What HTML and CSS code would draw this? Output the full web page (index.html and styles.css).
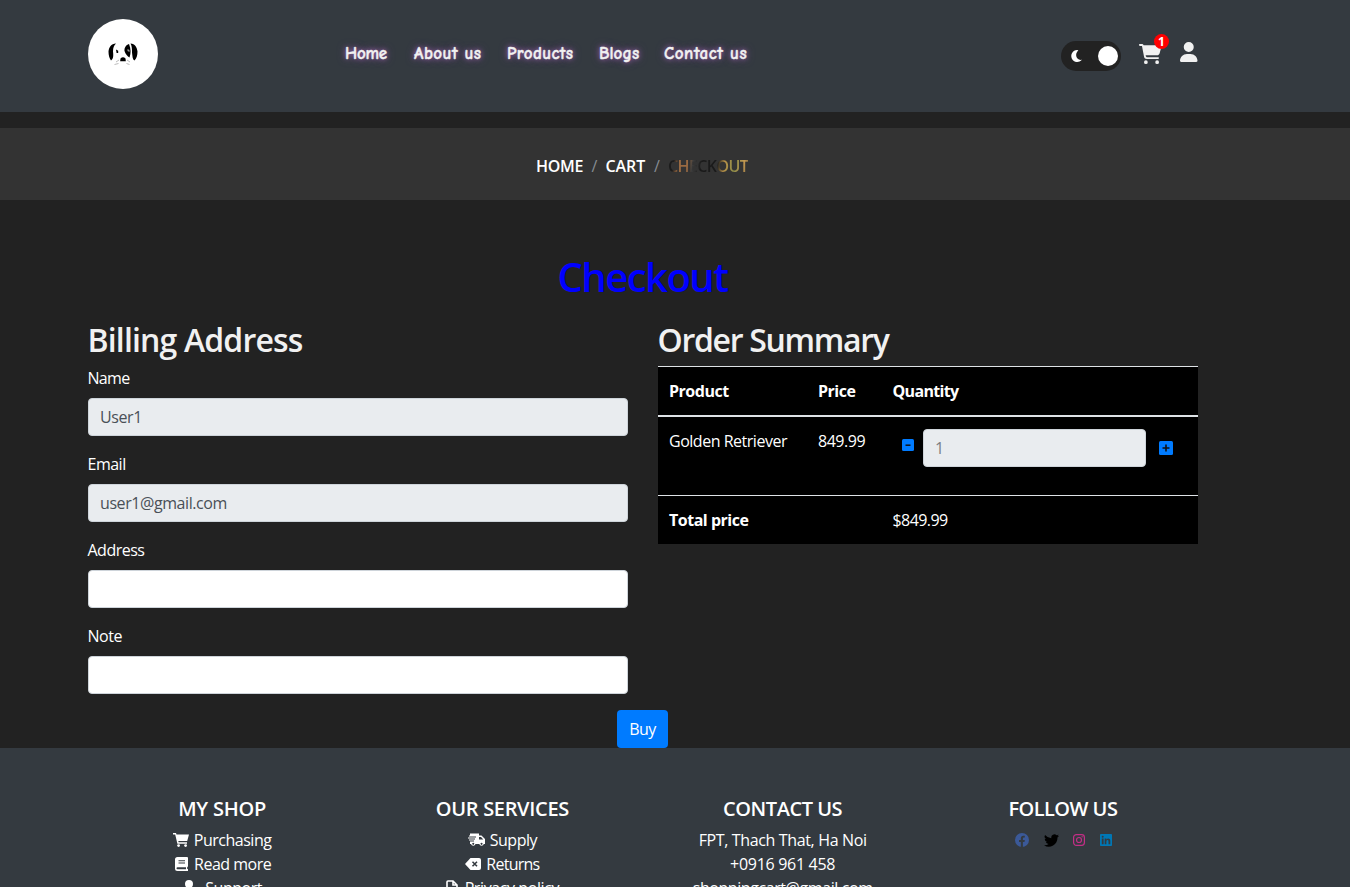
FILE: index.html
```html
<!DOCTYPE html>
<html lang="en">
<head>
<meta charset="utf-8">
<title>Checkout</title>
<link rel="stylesheet" href="styles.css">
</head>
<body>
<header class="header">
  <a class="logo"><svg width="70" height="70" viewBox="0 0 70 70">
    <path d="M28 24.500c-5 0-7 4-7.500 8 0 4 1 7 2.500 9 2.500-1.500 2.500-5 2-9 0-4 1-6 3-8z"/>
    <path d="M42.500 24.500c4.500 0 6.500 4 7 8 0 4-1 7-3 9-2-1-2-4-2.500-8 0-4 0-6-1.500-9z"/>
    <path d="M41 25c-3 1-5 4-4.500 7 1 3 3 5.500 5 6.500 1.500-4 1.500-9-.5-13.500z"/>
    <path d="M39.500 30l2 1v2l-2-1z" fill="#999"/>
    <path d="M28 30.500l2.200 1.200v2.300h-1.600z"/>
    <path d="M32.500 39.500q2.500-2.500 5 0l.3 2.800h-5.600z"/>
    <path d="M28 43l3-2M26.500 45.500l4-1M39 41l3 2M38.500 44.500l3 1" stroke="#aaa" stroke-width=".8"/>
  </svg></a>
  <nav class="nav">
    <a class="n1">Home</a><a class="n2">About us</a><a class="n3">Products</a><a class="n4">Blogs</a><a class="n5">Contact us</a>
  </nav>
  <div class="tools">
    <div class="toggle">
      <svg width="12" height="12" viewBox="0 0 12 12"><path d="M6 0a6 6 0 1 0 4.900 9.800C6.500 11 2.500 5 7.400.2Q6.800 0 6 0z" fill="#fff"/></svg>
      <span class="knob"></span>
    </div>
    <div class="cart">
      <svg width="22.500" height="20" viewBox="0 0 576 512"><path fill="#f1f1f1" d="M0 24C0 10.700 10.700 0 24 0H69.500c22 0 41.500 12.800 50.600 32h411c26.300 0 45.500 25 38.600 50.400l-41 152.300c-8.500 31.400-37 53.300-69.500 53.300H170.700l5.400 28.500c2.200 11.300 12.100 19.500 23.600 19.500H488c13.300 0 24 10.700 24 24s-10.700 24-24 24H199.700c-34.600 0-64.300-24.600-70.700-58.500L77.400 54.500c-.7-3.800-4-6.500-7.900-6.500H24C10.700 48 0 37.300 0 24zM128 464a48 48 0 1 1 96 0 48 48 0 1 1-96 0zm336-48a48 48 0 1 1 0 96 48 48 0 1 1 0-96z"/></svg>
      <span class="badge">1</span>
    </div>
    <svg class="user" width="17.500" height="20" viewBox="0 0 448 512"><path fill="#f1f1f1" d="M224 256A128 128 0 1 0 224 0a128 128 0 1 0 0 256zm-45.700 48C79.800 304 0 383.800 0 482.300C0 498.700 13.300 512 29.700 512H418.300c16.400 0 29.700-13.300 29.700-29.700C448 383.800 368.200 304 269.700 304H178.300z"/></svg>
  </div>
</header>

<div class="crumbs">
  <span class="c-home">HOME</span><span class="sep">/</span><span class="c-cart">CART</span><span class="sep">/</span><span class="c-current">CHECKOUT</span>
</div>

<main class="main">
  <h1>Checkout</h1>
  <div class="columns">
    <section class="billing">
      <h2>Billing Address</h2>
      <label class="name">Name</label><div class="field off">User1</div>
      <label>Email</label><div class="field off">user1@gmail.com</div>
      <label>Address</label><div class="field"></div>
      <label>Note</label><div class="field"></div>
    </section>
    <section class="summary">
      <h2 class="order">Order Summary</h2>
      <div class="table">
        <div class="row head"><span>Product</span><span>Price</span><span class="qty">Quantity</span></div>
        <div class="row item"><span>Golden Retriever</span><span>849.99</span>
          <div class="stepper">
            <svg class="minus" width="12" height="12" viewBox="0 0 12 12"><rect width="12" height="12" rx="1.500" fill="#007bff"/><path d="M3.500 6.200h5" stroke="#111" stroke-width="1.500"/></svg>
            <div class="field off count">1</div>
            <svg class="plus" width="14" height="14" viewBox="0 0 14 14"><rect width="14" height="14" rx="1.500" fill="#007bff"/><path d="M3.500 7h7M7 3.500v7" stroke="#111" stroke-width="1.600"/></svg>
          </div>
        </div>
        <div class="row total"><b>Total price</b><span></span><span class="sum">$849.99</span></div>
      </div>
    </section>
  </div>
  <div class="actions"><button class="buy">Buy</button></div>
</main>

<footer class="footer">
  <div class="col">
    <h5 class="f1">MY SHOP</h5>
    <p><svg width="16" height="14" viewBox="0 0 16 14"><path fill="#fff" d="M0 0h3l.5 1.500H16L14.200 8H5.300l.3 1.300H14v1.400H4.400L2.200 1.400H0z"/><circle cx="5.600" cy="12.600" r="1.400" fill="#fff"/><circle cx="12.600" cy="12.600" r="1.400" fill="#fff"/></svg><span>Purchasing</span></p>
    <p class="more"><svg width="13" height="14" viewBox="0 0 13 14"><path fill="#fff" fill-rule="evenodd" d="M2.500 0H12q1 0 1 1v8.500l-.8.500v2H13v2H2.500Q0 14 0 11.500v-9Q0 0 2.500 0zM3.500 3.200v1h6.500v-1zM3.500 5.500v1h6.500v-1zM2.500 10.200q-1 0-1 1t1 1h8.500v-2z"/></svg><span class="read">Read more</span></p>
    <p class="support"><svg width="14" height="16" viewBox="0 0 448 512"><path fill="#fff" d="M224 256A128 128 0 1 0 224 0a128 128 0 1 0 0 256zm-45.700 48C79.800 304 0 383.800 0 482.300C0 498.700 13.300 512 29.700 512H418.300c16.400 0 29.700-13.300 29.700-29.700C448 383.800 368.200 304 269.700 304H178.300z"/></svg><span>Support</span></p>
  </div>
  <div class="col">
    <h5 class="f2">OUR SERVICES</h5>
    <p><svg width="17" height="14" viewBox="0 0 17 14"><path fill="#fff" fill-rule="evenodd" d="M2 .5h9v2h2.500L17 6v5h-1.200a2.300 2.300 0 0 1-4.500 0H7.500a2.300 2.300 0 0 1-4.500 0H2V8.500h4v-1H1v-1h6v-1H0v-1h8v-1H1v-1h1zM11 4v2.500h4.300L13 4zM13.500 9.800a1 1 0 1 0 .1 0zM5.200 9.800a1 1 0 1 0 .1 0z"/></svg><span>Supply</span></p>
    <p><svg width="16" height="12" viewBox="0 0 16 12"><path fill="#fff" d="M5.500 0H14q2 0 2 2v8q0 2-2 2H5.500L0 6z"/><path d="M7.500 3.700l4.500 4.600M12 3.700L7.500 8.300" stroke="#343a40" stroke-width="1.500"/></svg><span class="returns">Returns</span></p>
    <p class="policy"><svg width="12" height="16" viewBox="0 0 12 16"><path fill="none" stroke="#fff" stroke-width="1.600" d="M1 15V2q0-1 1-1h5l4 4v10zM7 1v4h4"/></svg><span>Privacy policy</span></p>
  </div>
  <div class="col">
    <h5 class="f3">CONTACT US</h5>
    <p class="place">FPT, Thach That, Ha Noi</p>
    <p class="phone">+0916 961 458</p>
    <p class="mail">shoppingcart@gmail.com</p>
  </div>
  <div class="col">
    <h5 class="f4">FOLLOW US</h5>
    <div class="social">
      <svg width="14" height="14" viewBox="0 0 14 14"><circle cx="7" cy="7" r="7" fill="#3b5998"/><path d="M5.800 14V9H4V7h1.800V5.400q0-2.600 2.500-2.600h1.500v1.800H8.900q-1 0-1 1V7h1.900l-.3 2H7.900v5z" fill="#343a40"/></svg>
      <svg width="15" height="13" viewBox="0 0 24 20"><path d="M24 2.400a9.800 9.800 0 0 1-2.800.8A4.900 4.900 0 0 0 23.300.5a9.800 9.800 0 0 1-3.100 1.200 4.900 4.900 0 0 0-8.400 4.500A14 14 0 0 1 1.700 1.100a4.900 4.900 0 0 0 1.500 6.500A4.900 4.900 0 0 1 1 7v.1a4.900 4.900 0 0 0 3.900 4.800 4.900 4.900 0 0 1-2.200.1 4.900 4.900 0 0 0 4.600 3.400A9.900 9.900 0 0 1 0 17.400a13.900 13.900 0 0 0 21.500-12.400A10 10 0 0 0 24 2.400z"/></svg>
      <svg width="12" height="12" viewBox="0 0 12 12" fill="none" stroke="#c32f86" stroke-width="1.200"><rect x=".6" y=".6" width="10.800" height="10.800" rx="2.800"/><circle cx="6" cy="6" r="2.500"/><circle cx="9.200" cy="2.800" r=".2"/></svg>
      <svg width="12" height="12" viewBox="0 0 12 12"><rect width="12" height="12" rx=".8" fill="#0077b5"/><path d="M1.800 4.600h1.800v5.700H1.800zM4.700 4.600h1.700v.8q1.600-1.700 3.300-.4.600.6.600 2v3.300H8.500V7.400q0-1.300-1-1.300t-1.100 1.300v2.900H4.700z" fill="#343a40"/><circle cx="2.700" cy="2.700" r="1" fill="#343a40"/></svg>
    </div>
  </div>
</footer>
</body>
</html>
```
FILE: styles.css
```css
* { box-sizing: border-box; }
body {
  margin: 0;
  height: 887px;
  overflow: hidden;
  background: #222;
  color: #fff;
  font: 16px/24px "Segoe UI", "Open Sans", sans-serif;
  letter-spacing: -0.48px;
}
h1, h2, h5, p { margin: 0; font-weight: 600; }
p { font-weight: 400; }
svg { flex: none; display: block; }

.header {
  height: 112px;
  padding: 19px 152.500px 0 88px;
  background: #343a40;
  display: flex;
  align-items: flex-start;
}
.logo { width: 70px; height: 70px; border-radius: 50%; background: #fff; }
.nav {
  display: flex;
  margin: 23px 0 0 187px;
  font-family: "Comic Sans MS", "Comic Neue", cursive;
  font-size: 17px;
  font-weight: 700;
  color: #f1f1f1;
  white-space: nowrap;
  text-shadow: 0 0 5px #a565b5, 0 0 8px #6d4880;
  -webkit-text-stroke: 0.400px #f1f1f1;
}
.n1 { width: 69px; letter-spacing: -0.200px; }
.n2 { width: 93px; letter-spacing: 0.500px; }
.n3 { width: 92px; letter-spacing: 0.400px; }
.n4 { width: 65px; letter-spacing: 0.100px; }
.n5 { letter-spacing: 0.550px; }

.tools { display: flex; margin-left: auto; padding-top: 22px; }
.toggle {
  width: 60px;
  height: 30px;
  padding: 0 3px 0 10px;
  border-radius: 15px;
  background: #222;
  display: flex;
  align-items: center;
  justify-content: space-between;
}
.knob { width: 20px; height: 20px; border-radius: 50%; background: #fff; }
.cart { position: relative; margin: 3px 0 0 18px; }
.badge {
  position: absolute;
  left: 15px;
  top: -10px;
  width: 15px;
  height: 15px;
  border-radius: 50%;
  background: red;
  font: 700 12px/15px "Open Sans", sans-serif;
  text-align: center;
  letter-spacing: 0;
}
.user { margin: 1px 0 0 18.500px; }

.crumbs {
  height: 72px;
  margin-top: 16px;
  padding: 26px 0 0 536px;
  background: #333;
  display: flex;
  font-weight: 600;
}
.c-home { width: 47px; letter-spacing: -0.3px; }
.c-cart { width: 40px; letter-spacing: -0.1px; }
.sep { width: 22.500px; text-align: center; color: #868c92; font-weight: 400; }
.c-current {
  letter-spacing: -0.6px;
  color: transparent;
  background: linear-gradient(100deg, #1c1c1c 0 8%, #9a6a42 14% 24%, #3c3c3c 30%, #1a1a1a 40% 58%, #b89148 66%, #8a8a48 78%, #c69a52 88%, #3c3a26 100%);
  background-clip: text;
  -webkit-background-clip: text;
}

.main { width: 1110px; margin-left: 87.500px; }
h1 {
  padding-top: 53px;
  font-size: 40px;
  line-height: 48px;
  letter-spacing: -1.5px;
  color: blue;
  text-align: center;
}
.columns { display: flex; gap: 30px; padding-top: 19px; }
.billing, .summary { width: 540px; }
h2 {
  height: 46px;
  font-size: 32px;
  line-height: 40px;
  letter-spacing: -0.84px;
  color: #f1f1f1;
}
.order { letter-spacing: -1.300px; }
label { display: block; height: 32px; letter-spacing: -0.5px; }
.name { letter-spacing: -0.68px; }
.field {
  height: 38px;
  margin-bottom: 16px;
  padding: 6px 12px 6px 11.500px;
  border: 1px solid #ced4da;
  border-radius: 4px;
  background: #fff;
  color: #495057;
  letter-spacing: -0.42px;
}
.off { background: #e9ecef; }
.table { background: #000; }
.row {
  display: grid;
  grid-template-columns: 149px 74.500px 1fr;
  padding: 12px 0 0 11.500px;
  border-top: 1px solid #dee2e6;
}
.head { height: 51px; border-bottom: 2px solid #dee2e6; font-weight: 700; }
.qty { letter-spacing: -0.66px; }
.item { height: 78px; border: 0; }
.total { height: 49px; }
.sum { letter-spacing: -0.58px; }
.stepper { display: flex; }
.minus { margin: 10px 9px 0; }
.count { width: 223px; margin: 0; color: #7b7f83; }
.plus { margin: 12px 0 0 13px; }
.actions { display: flex; justify-content: center; }
.buy {
  width: 51px;
  height: 38px;
  padding: 0;
  border: 0;
  border-radius: 4px;
  background: #007bff;
  color: #fff;
  font: inherit;
  letter-spacing: -0.600px;
}

.footer {
  height: 160px;
  padding: 49px 147px 0 82px;
  background: #343a40;
  display: grid;
  grid-template-columns: repeat(4, 1fr);
}
.col { text-align: center; }
h5 { font-size: 20px; line-height: 24px; margin-bottom: 7px; }
.f1 { letter-spacing: -0.22px; }
.f2 { letter-spacing: -0.32px; }
.f3 { letter-spacing: -0.46px; }
.f4 { letter-spacing: -0.54px; }
.col p { height: 24px; display: flex; justify-content: center; align-items: center; gap: 5px; white-space: nowrap; }
.read { letter-spacing: -0.5px; }
.col .more { gap: 6px; padding-left: 2px; }
.returns { letter-spacing: -0.76px; }
.col .support { gap: 9px; }
.col .policy { gap: 7px; letter-spacing: -0.400px; }
.mail { letter-spacing: -0.420px; }
.place { letter-spacing: -0.36px; }
.phone { letter-spacing: -0.3px; }
.social { display: flex; justify-content: center; align-items: center; gap: 14.500px; height: 24px; padding-left: 1px; }
```
